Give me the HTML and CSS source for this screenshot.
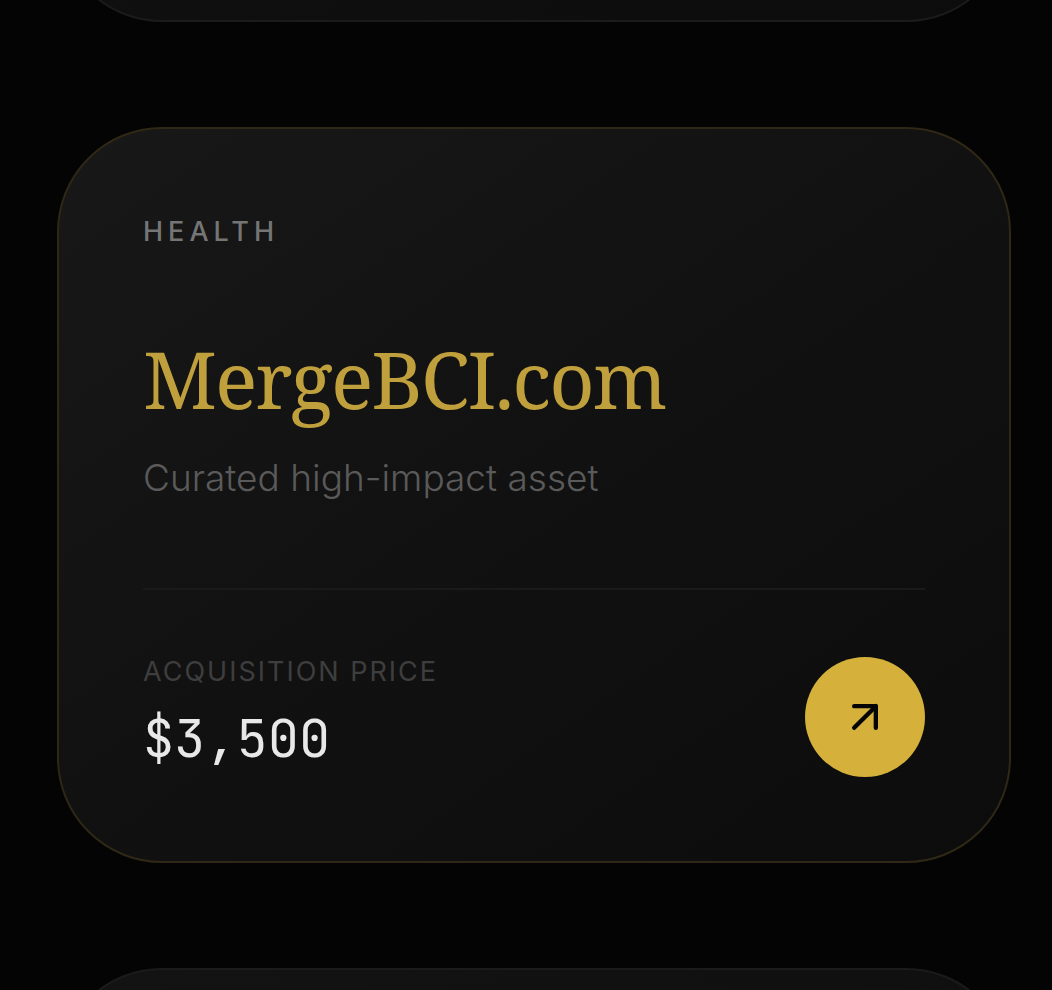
FILE: index.html
```html
<!DOCTYPE html>
<html lang="en">
<head>
  <meta charset="UTF-8">
  <meta name="viewport" content="width=device-width, initial-scale=1.0">
  <title>MergeBCI.com</title>
  <link rel="stylesheet" href="styles.css">
</head>
<body>

  <main class="viewport">
    <div class="listings">
      <article class="card"></article>

      <article class="card featured">
        <p class="category">HEALTH</p>
        <h2 class="domain">MergeBCI.com</h2>
        <p class="tagline">Curated high-impact asset</p>

        <div class="card-footer">
          <div class="pricing">
            <p class="price-label">ACQUISITION PRICE</p>
            <p class="price">$3,500</p>
          </div>
          <button class="open-btn" type="button" aria-label="View MergeBCI.com">
            <svg class="icon" viewBox="0 0 24 24" aria-hidden="true">
              <path d="M7 7h10v10" />
              <path d="M7 17 17 7" />
            </svg>
          </button>
        </div>
      </article>

      <article class="card"></article>
    </div>
  </main>

</body>
</html>
```

FILE: styles.css
```css
* {
  box-sizing: border-box;
  margin: 0;
  padding: 0;
}

body {
  background-color: #040404;
  color: #e8e8e8;
  font-family: Inter, sans-serif;
}

/* Card list, the neighbours run off the top and bottom */
.viewport {
  display: flex;
  align-items: center;
  height: 100vh;
  overflow: hidden;
}

.listings {
  flex: 1;
  display: grid;
  grid-auto-rows: 1fr;
  gap: 105px;
  padding: 0 41px 0 57px;
}

.card {
  padding: 84px;
  border: 2px solid #1b1b1b;
  border-radius: 105px;
  background: linear-gradient(145deg, #131313, #0c0c0c);
}

.card.featured {
  border-color: #302816;
  background: linear-gradient(145deg, #181818, #111111 50%, #0c0c0c);
}

.category {
  font-size: 27px;
  line-height: 38px;
  font-weight: 500;
  letter-spacing: 5px;
  color: #757575;
}

.domain {
  margin-top: 79px;
  font-family: "Noto Serif", "DejaVu Serif", serif;
  font-size: 79px;
  line-height: 98px;
  font-weight: 400;
  letter-spacing: -2px;
  color: #c0a03c;
}

.tagline {
  margin-top: 24px;
  font-size: 37px;
  line-height: 52px;
  font-weight: 300;
  color: #5a5a5a;
}

/* Footer */
.card-footer {
  display: flex;
  align-items: flex-end;
  justify-content: space-between;
  margin-top: 84px;
  padding-top: 64px;
  border-top: 2px solid #1a1a1a;
}

.price-label {
  font-size: 27px;
  line-height: 36px;
  letter-spacing: 2px;
  color: #3e3e3e;
}

.price {
  margin-top: 11px;
  font-family: "JetBrains Mono", "Liberation Mono", monospace;
  font-size: 52px;
  line-height: 76px;
  font-weight: 400;
  color: #e8e8e8;
}

.open-btn {
  display: flex;
  align-items: center;
  justify-content: center;
  width: 120px;
  height: 120px;
  border: none;
  border-radius: 50%;
  background-color: #d5b13c;
  cursor: pointer;
}

.icon {
  width: 52px;
  height: 52px;
  fill: none;
  stroke: #050505;
  stroke-width: 2;
  stroke-linecap: round;
  stroke-linejoin: round;
}
```
